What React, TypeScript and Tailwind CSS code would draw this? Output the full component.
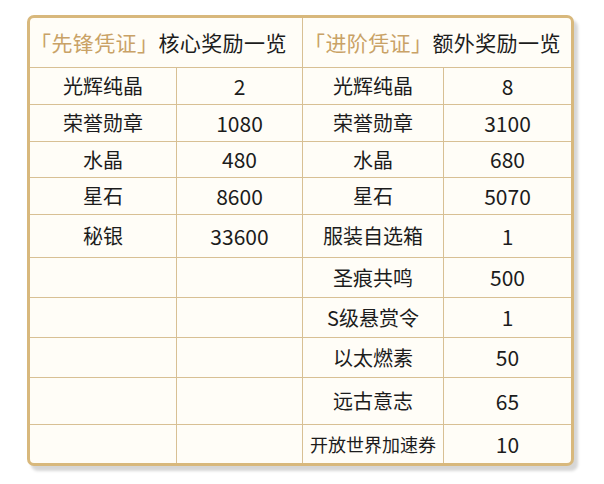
import React from 'react';

const rows: { a: string; b: string; c: string; d: string; h: string; small?: boolean }[] = [
    { a: '光辉纯晶', b: '2', c: '光辉纯晶', d: '8', h: 'h-[37px]' },
    { a: '荣誉勋章', b: '1080', c: '荣誉勋章', d: '3100', h: 'h-[37px]' },
    { a: '水晶', b: '480', c: '水晶', d: '680', h: 'h-[36px]' },
    { a: '星石', b: '8600', c: '星石', d: '5070', h: 'h-[37px]' },
    { a: '秘银', b: '33600', c: '服装自选箱', d: '1', h: 'h-[43px]' },
    { a: '', b: '', c: '圣痕共鸣', d: '500', h: 'h-[40px]' },
    { a: '', b: '', c: 'S级悬赏令', d: '1', h: 'h-[40px]' },
    { a: '', b: '', c: '以太燃素', d: '50', h: 'h-[40px]' },
    { a: '', b: '', c: '远古意志', d: '65', h: 'h-[47px]' },
    { a: '', b: '', c: '开放世界加速券', d: '10', h: 'h-[39px]', small: true },
];

const App: React.FC = () => {
    return (
        <div
            className="w-[604px] h-[484px] bg-white pt-[15px] pl-[27px] text-[#1c1c1c]"
            style={{ fontFamily: '"Noto Sans CJK SC", "Noto Sans", sans-serif' }}
        >
            <div className="w-[547px] h-[451px] rounded-[7px] border-[3px] border-[#d8b87c] bg-[#fffdf7] overflow-hidden shadow-[4px_5px_3px_rgba(0,0,0,0.16)]">
                {/* Header */}
                <div className="flex h-[49px]">
                    <div className="w-[272px] flex items-center text-[21px] tracking-[0.4px] leading-none whitespace-nowrap">
                        <span className="text-[#c9a266]">「先锋凭证」</span>
                        <span>核心奖励一览</span>
                    </div>
                    <div className="w-[269px] border-l border-[#d8c094] flex items-center pl-[1px] text-[21px] tracking-[0.4px] leading-none whitespace-nowrap">
                        <span className="text-[#c9a266]">「进阶凭证」</span>
                        <span>额外奖励一览</span>
                    </div>
                </div>

                {rows.map((r, i) => (
                    <div key={i} className={`flex border-t border-[#d8c094] text-[20px] leading-none ${r.h}`}>
                        <div className="w-[146px] flex items-center justify-center">{r.a}</div>
                        <div className="w-[126px] border-l border-[#d8c094] flex items-center justify-center text-[21px]">{r.b}</div>
                        <div className={`w-[141px] border-l border-[#d8c094] flex items-center justify-center ${r.small ? 'text-[18px]' : ''}`}>{r.c}</div>
                        <div className="w-[128px] border-l border-[#d8c094] flex items-center justify-center text-[21px]">{r.d}</div>
                    </div>
                ))}
            </div>
        </div>
    );
};

export default App;
